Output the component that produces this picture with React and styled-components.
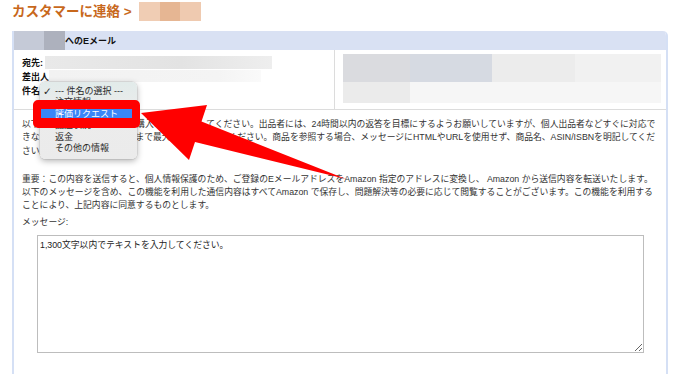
import React from 'react';
import styled, { createGlobalStyle } from 'styled-components';

const GlobalStyle = createGlobalStyle`
    body {
        margin: 0;
        background: #fff;
        font-family: "Liberation Sans", "Noto Sans CJK JP", sans-serif;
    }
`

const subjects = ['注文情報', '評価リクエスト', '配送状況', '返金', 'その他の情報'];

function App() {
    return (
        <Page>
            <GlobalStyle />
            <TitleRow>
                <Title>カスタマーに連絡 &gt;</Title>
                <TitleBlur />
            </TitleRow>
            <Panel>
                <PanelHeader>
                    <HeaderBlur />
                    <HeaderText>へのEメール</HeaderText>
                </PanelHeader>
                <InfoRow>
                    <LeftCol>
                        <Field>
                            <Label>宛先:</Label>
                            <Redacted width={227} />
                        </Field>
                        <Field>
                            <Label>差出人</Label>
                            <Redacted width={212} light />
                        </Field>
                        <Field>
                            <Label>件名</Label>
                        </Field>
                    </LeftCol>
                    <RightCol>
                        <AddressBlur />
                    </RightCol>
                </InfoRow>
                <Body>
                    <Para>
                        以下のフォームに入力し、ご購入の件で連絡してください。出品者には、24時間以内の返答を目標にするようお願いしていますが、個人出品者などすぐに対応で<br />
                        きない場合があります。返答まで最大2営業日お待ちください。商品を参照する場合、メッセージにHTMLやURLを使用せず、商品名、ASIN/ISBNを明記してくだ<br />
                        さい。
                    </Para>
                    <Para gap={15}>
                        重要：この内容を送信すると、個人情報保護のため、ご登録のEメールアドレスをAmazon 指定のアドレスに変換し、 Amazon から送信内容を転送いたします。<br />
                        以下のメッセージを含め、この機能を利用した通信内容はすべてAmazon で保存し、問題解決等の必要に応じて閲覧することがございます。この機能を利用する<br />
                        ことにより、上記内容に同意するものとします。
                    </Para>
                    <Para gap={3}>メッセージ:</Para>
                    <Message defaultValue="1,300文字以内でテキストを入力してください。" />
                </Body>
            </Panel>

            <SelectMenu>
                <MenuItem><Check>✓</Check>--- 件名の選択 ---</MenuItem>
                {subjects.map((s, i) => (
                    <MenuItem key={i} active={i === 1}>{s}</MenuItem>
                ))}
            </SelectMenu>
            <Highlight />
            <Arrow viewBox="0 0 680 374">
                <polygon
                    points="141,113 207,105 201.5,121.5 346,179 195,142 189,160"
                    fill="#ff0000"
                />
            </Arrow>
        </Page>
    )
}

export default App;

const Page = styled.div`
    position: relative;
    width: 680px;
    height: 374px;
    overflow: hidden;
`

const TitleRow = styled.div`
    display: flex;
    align-items: center;
    gap: 7px;
    height: 23px;
    padding-left: 12px;
`

const Title = styled.h1`
    margin: 0;
    font-size: 13.5px;
    font-weight: bold;
    color: #c8681c;
    line-height: 23px;
`

const TitleBlur = styled.div`
    width: 62px;
    height: 19px;
    background: linear-gradient(to right, #f0cdb4 0 21px, #e6b693 21px 41px, #efcab0 41px);
`

const Panel = styled.div`
    margin: 8px 0 0 12px;
    width: 652px;
    height: 360px;
    border-left: 2px solid #d5e0f5;
    border-right: 2px solid #d5e0f5;
    border-top-right-radius: 5px;
    overflow: hidden;
`

const PanelHeader = styled.div`
    display: flex;
    align-items: center;
    height: 19px;
    margin-left: -2px;
    background: #d9e1f3;
`

const HeaderBlur = styled.div`
    width: 53px;
    height: 19px;
    background: linear-gradient(to right, #c5cad7 0 32px, #adb1bd 32px);
`

const HeaderText = styled.span`
    font-size: 9px;
    font-weight: bold;
    color: #111;
`

const InfoRow = styled.div`
    display: grid;
    grid-template-columns: 321px 1fr;
    height: 59px;
    border-bottom: 1px solid #dcdcdc;
`

const LeftCol = styled.div`
    padding: 5px 0 0 8px;
    border-right: 1px solid #dcdcdc;
`

const Field = styled.div`
    display: flex;
    align-items: center;
    height: 14px;
`

const Label = styled.span`
    min-width: 23px;
    font-size: 9px;
    font-weight: bold;
    color: #111;
    white-space: nowrap;
`

const Redacted = styled.div`
    width: ${p => p.width}px;
    height: ${p => p.light ? 12 : 13}px;
    background: ${p => p.light
        ? 'linear-gradient(to right, #f2f2f2, #f4f4f4 80%, #fafafa)'
        : 'linear-gradient(to right, #e9e9e9, #e3e3e3 60%, #eeeeee)'};
`

const RightCol = styled.div`
    padding: 4px 5px 0 8px;
`

const AddressBlur = styled.div`
    height: 49px;
    background:
        linear-gradient(to right, #dadbdf 0 67px, #d6dae2 67px 149px, #ececec 149px 232px, #f1f1f1 232px) top / 100% 28px no-repeat,
        linear-gradient(to right, #ebebeb 0 67px, #f6f6f6 67px) bottom / 100% 21px no-repeat;
`

const Body = styled.div`
    padding: 8px 8px 0 8px;
`

const Para = styled.p`
    margin: ${p => p.gap || 0}px 0 0 0;
    font-size: 8.8px;
    line-height: 13.3px;
    color: #333;
    white-space: nowrap;
`

const Message = styled.textarea`
    display: block;
    box-sizing: border-box;
    margin: 6px 0 0 15px;
    width: 607px;
    height: 118px;
    padding: 3px 2px;
    border: 1px solid #bdbdbd;
    font-family: "Liberation Sans", "Noto Sans CJK JP", sans-serif;
    font-size: 8.8px;
    line-height: 13px;
    color: #222;
    resize: both;
`

const SelectMenu = styled.div`
    position: absolute;
    left: 40px;
    top: 82px;
    width: 97px;
    box-sizing: border-box;
    padding: 3.5px 1px 4.5px 1px;
    border-radius: 5px;
    background: linear-gradient(to bottom, #e2ebea, #ececec 40%, #ebebeb);
    box-shadow: 0 2px 6px rgba(0, 0, 0, 0.3), 0 0 0 0.5px rgba(0, 0, 0, 0.12);
`

const MenuItem = styled.div`
    position: relative;
    height: 11.5px;
    line-height: 11.5px;
    padding-left: 14px;
    font-size: 9px;
    color: ${p => p.active ? '#fff' : '#2a2a2a'};
    background: ${p => p.active ? '#3a86f7' : 'transparent'};
    white-space: nowrap;
`

const Check = styled.span`
    position: absolute;
    left: 2px;
    top: 0;
    font-family: "DejaVu Sans", sans-serif;
    font-size: 10.5px;
    font-weight: bold;
`

const Highlight = styled.div`
    position: absolute;
    left: 33px;
    top: 100px;
    width: 107px;
    height: 28px;
    box-sizing: border-box;
    border: solid #ff0000;
    border-width: 9px 8px 10px 8px;
    border-radius: 5px;
`

const Arrow = styled.svg`
    position: absolute;
    left: 0;
    top: 0;
    width: 680px;
    height: 374px;
    pointer-events: none;
`
